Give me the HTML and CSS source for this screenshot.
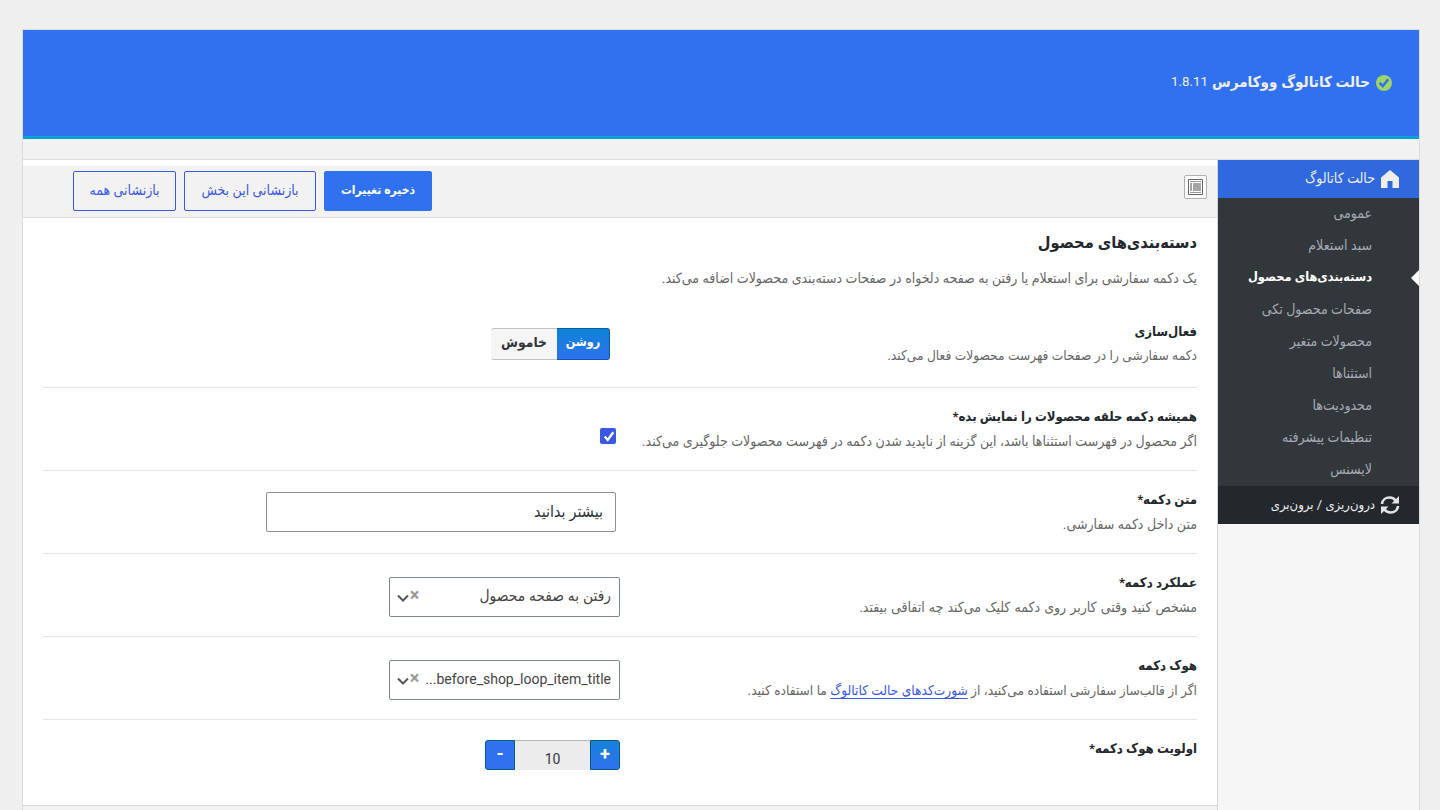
FILE: index.html
```html
<!DOCTYPE html>
<html lang="fa" dir="rtl">
<head>
    <meta charset="UTF-8">
    <meta name="viewport" content="width=device-width, initial-scale=1.0">
    <title>حالت کاتالوگ ووکامرس</title>
    <link rel="stylesheet" href="styles.css">
</head>
<body>
<div class="panel">
    <header class="panel-header">
        <svg class="check-badge" viewBox="0 0 16 16"><circle cx="8" cy="8" r="8" fill="#a0d468"/><path d="M3.6 7.800l3.200 3.400 5.400-7" fill="none" stroke="#2f71ee" stroke-width="2.500"/></svg>
        <h1>حالت کاتالوگ ووکامرس</h1>
        <span class="version">1.8.11</span>
    </header>

    <div class="panel-body">
        <nav class="sidebar">
            <a class="menu-head active">
                <svg class="menu-icon" viewBox="0 0 20 20"><path d="M1 8.500L10 1l9 7.500V19h-6.500v-7h-5v7H1z" fill="#eee"/></svg>
                <span>حالت کاتالوگ</span>
            </a>
            <ul class="submenu">
                <li><span>عمومی</span></li>
                <li><span>سبد استعلام</span></li>
                <li class="current"><span>دسته‌بندی‌های محصول</span></li>
                <li><span>صفحات محصول تکی</span></li>
                <li><span>محصولات متغیر</span></li>
                <li><span>استثناها</span></li>
                <li><span>محدودیت‌ها</span></li>
                <li><span>تنظیمات پیشرفته</span></li>
                <li><span>لایسنس</span></li>
            </ul>
            <a class="menu-head import">
                <svg class="menu-icon" viewBox="0 0 20 20"><path d="M2 9C2.300 4.800 5.800 2.500 9.500 2.500c2.800 0 4.800 1.200 6 2.900M18 11c-.3 4.200-3.800 6.500-7.500 6.500-2.800 0-4.800-1.200-6-2.900" fill="none" stroke="#e4e4e4" stroke-width="2.600"/><path d="M19 1v7.500h-7.500zM1 19v-7.500h7.500z" fill="#e4e4e4"/></svg>
                <span>درون‌ریزی / برون‌بری</span>
            </a>
        </nav>

        <main class="content">
            <div class="toolbar">
                <span class="expand-btn">
                    <svg viewBox="0 0 15 16"><path d="M.5.500h14v15H.5z" fill="#fff" stroke="#666"/><path d="M2 2.500h11M2 13.500h11" stroke="#999"/><path d="M2 4h2v8H2zM5 4h8v8H5z" fill="#a5a5a5"/></svg>
                </span>
                <div class="actions">
                    <button type="button" class="btn primary"><span>ذخیره تغییرات</span></button>
                    <button type="button" class="btn reset-section"><span>بازنشانی این بخش</span></button>
                    <button type="button" class="btn reset-all"><span>بازنشانی همه</span></button>
                </div>
            </div>

            <section class="section">
                <h2>دسته‌بندی‌های محصول</h2>
                <p class="intro">یک دکمه سفارشی برای استعلام یا رفتن به صفحه دلخواه در صفحات دسته‌بندی محصولات اضافه می‌کند.</p>

                <div class="row first">
                    <div class="label">
                        <h3>فعال‌سازی</h3>
                        <p class="small">دکمه سفارشی را در صفحات فهرست محصولات فعال می‌کند.</p>
                    </div>
                    <div class="switch">
                        <span class="on">روشن</span>
                        <span class="off">خاموش</span>
                    </div>
                </div>

                <div class="row">
                    <div class="label">
                        <h3>همیشه دکمه حلقه محصولات را نمایش بده*</h3>
                        <p>اگر محصول در فهرست استثناها باشد، این گزینه از ناپدید شدن دکمه در فهرست محصولات جلوگیری می‌کند.</p>
                    </div>
                    <span class="checkbox">
                        <svg viewBox="0 0 16 16"><path d="M4.700 8.600l3 3.300 5.600-7.600" fill="none" stroke="#fff" stroke-width="2.300"/></svg>
                    </span>
                </div>

                <div class="row">
                    <div class="label">
                        <h3>متن دکمه*</h3>
                        <p>متن داخل دکمه سفارشی.</p>
                    </div>
                    <input class="text-input" type="text" value="بیشتر بدانید">
                </div>

                <div class="row">
                    <div class="label">
                        <h3>عملکرد دکمه*</h3>
                        <p class="loose">مشخص کنید وقتی کاربر روی دکمه کلیک می‌کند چه اتفاقی بیفتد.</p>
                    </div>
                    <div class="select">
                        <span class="value">رفتن به صفحه محصول</span>
                        <span class="clear">×</span>
                        <svg class="arrow" viewBox="0 0 12 8"><path d="M1 1.500l5 5 5-5" fill="none" stroke="#50575e" stroke-width="2"/></svg>
                    </div>
                </div>

                <div class="row">
                    <div class="label">
                        <h3>هوک دکمه</h3>
                        <p class="small">اگر از قالب‌ساز سفارشی استفاده می‌کنید، از <a href="#">شورت‌کدهای حالت کاتالوگ</a> ما استفاده کنید.</p>
                    </div>
                    <div class="select">
                        <span class="value latin">before_shop_loop_item_title...</span>
                        <span class="clear">×</span>
                        <svg class="arrow" viewBox="0 0 12 8"><path d="M1 1.500l5 5 5-5" fill="none" stroke="#50575e" stroke-width="2"/></svg>
                    </div>
                </div>

                <div class="row">
                    <div class="label">
                        <h3>اولویت هوک دکمه*</h3>
                    </div>
                    <div class="spinner">
                        <span class="step up">+</span>
                        <span class="number">10</span>
                        <span class="step down">-</span>
                    </div>
                </div>
            </section>
        </main>
    </div>
</div>
</body>
</html>
```

FILE: styles.css
```css
* {
    box-sizing: border-box;
}

body {
    margin: 0;
    padding: 29px 20px 0 22px;
    height: 810px;
    overflow: hidden;
    background-color: #efefef;
    font-family: Roboto, "DejaVu Sans Condensed", "DejaVu Sans", sans-serif;
    font-size: 14px;
    color: #32373c;
}

h1, h2, h3, p, ul {
    margin: 0;
    padding: 0;
}

span, h1, h2, h3, p {
    white-space: nowrap;
}

.panel {
    height: 781px;
    border: 1px solid #dcdcdc;
    border-bottom: 0;
    background-color: #f2f2f2;
}

.panel-header {
    height: 109px;
    padding: 0 27px 3px 0;
    display: flex;
    align-items: center;
    background-color: #2f71ee;
    border-bottom: 3px solid #00a0d2;
    color: #eee;
}

.check-badge {
    width: 16px;
    height: 16px;
    margin-top: 2px;
}

.panel-header h1 {
    margin: 0 6px 0 4px;
    font-size: 15.1px;
}

.version {
    font-size: 13.3px;
}

.panel-body {
    display: flex;
    height: 651px;
    margin-top: 20px;
    border-top: 1px solid #dcdcdc;
}

.sidebar {
    width: 202px;
    flex-shrink: 0;
    border-left: 1px solid #d5d5d5;
    background-color: #f6f6f6;
}

.menu-head {
    display: flex;
    align-items: center;
    height: 38px;
    padding-right: 19px;
    gap: 5px;
    color: #eee;
    background-color: #23282d;
}

.menu-head span {
    margin-bottom: 2px;
}

.menu-head.active {
    background-color: #2f69dd;
}

.menu-head.import {
    font-size: 13px;
}

.menu-icon {
    width: 20px;
    height: 20px;
}

.submenu {
    list-style: none;
    background-color: #32373c;
}

.submenu li {
    display: flex;
    align-items: center;
    position: relative;
    height: 32px;
    padding: 0 47px 2px 0;
    color: #a5aab0;
}

.submenu .current {
    padding-bottom: 3px;
    color: #fff;
    font-size: 12.7px;
    font-weight: bold;
}

.submenu .current::before {
    content: "";
    position: absolute;
    right: 0;
    top: 8px;
    border: 8px solid transparent;
    border-left-width: 0;
    border-right-color: #fff;
}

.content {
    flex: 1;
    height: 646px;
    padding-top: 6px;
    background-color: #fff;
    border-bottom: 1px solid #d8d8d8;
}

.toolbar {
    display: flex;
    align-items: center;
    justify-content: space-between;
    height: 52px;
    padding: 0 10px 1px 50px;
    background-color: #f2f2f2;
    border-bottom: 1px solid #dcdcdc;
}

.expand-btn {
    display: flex;
    align-items: center;
    justify-content: center;
    width: 23px;
    height: 24px;
    margin-bottom: 8px;
    border: 1px solid #b0b0b0;
    border-radius: 2px;
    background-color: #fafafa;
}

.expand-btn svg {
    width: 15px;
    height: 16px;
}

.actions {
    display: flex;
    gap: 8px;
}

.btn {
    height: 40px;
    padding: 0 0 3px;
    border: 1px solid #3858e9;
    border-radius: 2px;
    background: transparent;
    color: #3858e9;
    font-family: inherit;
    font-size: 14px;
}

.btn.primary {
    width: 108px;
    background-color: #2f71ee;
    border-color: #2f71ee;
    color: #fff;
    font-size: 12px;
    font-weight: bold;
}

.reset-section {
    width: 132px;
}

.reset-all {
    width: 103px;
}

.section {
    padding: 14px 20px 0;
}

.section h2 {
    font-size: 16.3px;
    line-height: 22px;
    color: #23282d;
}

.intro {
    margin: 14px 0 16px;
    line-height: 20px;
    color: #666;
}

.row {
    display: flex;
    height: 83px;
    padding-top: 18px;
    border-bottom: 1px solid #e5e5e5;
}

.row.first {
    height: 84px;
}

.row:last-child {
    border-bottom: 0;
}

.label {
    width: 577px;
    flex-shrink: 0;
}

.label h3 {
    font-size: 13.1px;
    line-height: 22px;
    color: #23282d;
}

.label p {
    margin-top: 3px;
    line-height: 20px;
    color: #666;
}

.first h3 {
    line-height: 20px;
}

.label .small {
    font-size: 13.6px;
}

.label .loose {
    word-spacing: 0.6px;
}

.label a {
    color: #3858e9;
    text-underline-offset: 3px;
}

.switch {
    display: flex;
    height: 32px;
    margin: 6px 10px 0 0;
    font-size: 13.7px;
    font-weight: bold;
    line-height: 26px;
    text-align: center;
}

.on {
    width: 53px;
    font-size: 12.5px;
    color: #fff;
    background: linear-gradient(#0c83d6, #2f71ee);
    border: 1px solid #0a5ba8;
    border-left: 0;
    border-radius: 0 3px 3px 0;
}

.off {
    width: 66px;
    background-color: #f5f5f5;
    border: 1px solid #c2c2c2;
    border-left: 0;
    border-right: 0;
    border-radius: 3px 0 0 3px;
}

.checkbox {
    width: 16px;
    height: 16px;
    margin: 22px 4px 0 0;
    border-radius: 2px;
    background-color: #3858e9;
}

.checkbox svg {
    display: block;
}

.text-input {
    width: 350px;
    height: 40px;
    margin: 3px 4px 0 0;
    padding: 0 12px 2px;
    border: 1px solid #8c8f94;
    border-radius: 2px;
    font-family: inherit;
    font-size: 16px;
    color: #2c3338;
}

.select {
    display: flex;
    width: 231px;
    height: 40px;
    margin-top: 5px;
    padding: 0 8px 0 7px;
    border: 1px solid #7e8993;
    border-radius: 2px;
    font-size: 15.4px;
    line-height: 37px;
    color: #444;
}

.select .value {
    flex: 1;
    min-width: 0;
}

.select .latin {
    font-size: 14px;
}

.select .clear {
    width: 11px;
    line-height: 33px;
    font-size: 18px;
    font-weight: bold;
    text-align: center;
    color: #999;
}

.select .arrow {
    width: 12px;
    height: 8px;
    margin-top: 16px;
}

.spinner {
    display: flex;
    height: 30px;
    margin-top: 2px;
    text-align: center;
    color: #32373c;
}

.step {
    width: 30px;
    background-color: #2f71ee;
    border: 1px solid #005a87;
    color: #fff;
    font-size: 18px;
    font-weight: bold;
    line-height: 25px;
}

.up {
    border-radius: 0 3px 3px 0;
    background: linear-gradient(#1681db, #2f71ee);
}

.down {
    border-radius: 3px 0 0 3px;
}

.number {
    width: 75px;
    background-color: #ececec;
    border-top: 1px solid #b4b9be;
    font-size: 14px;
    line-height: 37px;
}
```
